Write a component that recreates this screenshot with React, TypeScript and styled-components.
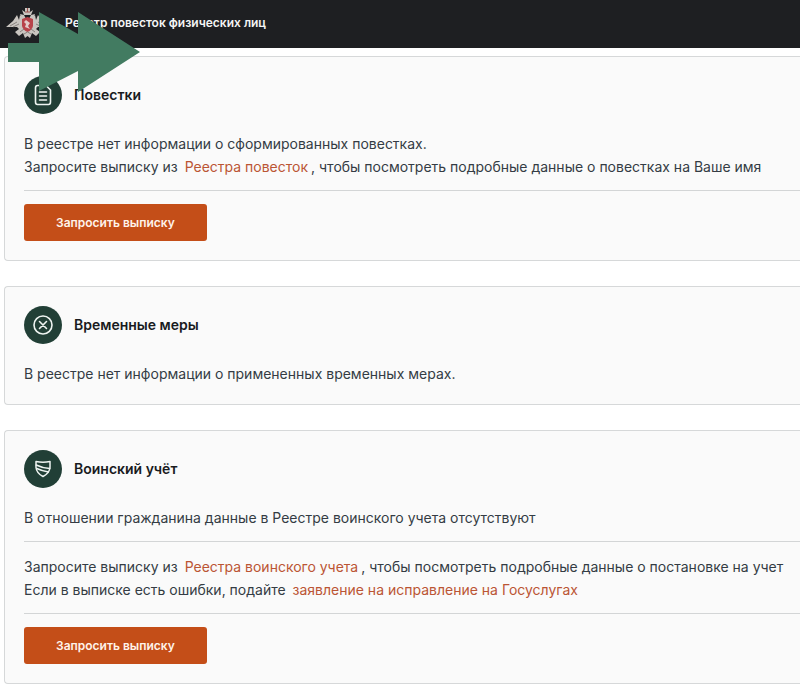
import React from "react";
import styled, { createGlobalStyle } from "styled-components";

const GlobalStyle = createGlobalStyle`
  *, *::before, *::after { box-sizing: border-box; }
  body {
    margin: 0;
    background: #fff;
    color: #343c44;
    font-family: Inter, "Liberation Sans", sans-serif;
    overflow-x: hidden;
  }
`;

const Page = styled.div`
  position: relative;
`;

const Header = styled.header`
  display: flex;
  align-items: center;
  gap: 16px;
  height: 48px;
  padding: 0 6px 3px;
  background: #1e1f22;
`;

const SiteName = styled.span`
  color: #f4f4f4;
  font-size: 12px;
  font-weight: 600;
  line-height: 20px;
  white-space: nowrap;
`;

const Main = styled.main`
  display: flex;
  flex-direction: column;
  gap: 25px;
  padding: 8px 0 6px 4px;
`;

const Card = styled.section`
  padding: 19px 0 19px 19px;
  border: 1px solid #d6d8d9;
  border-right: 0;
  border-radius: 4px 0 0 4px;
  background: #fafafa;
`;

const CardHead = styled.div`
  display: flex;
  align-items: center;
  gap: 12px;
  margin-bottom: 18px;
`;

const Badge = styled.span`
  display: flex;
  align-items: center;
  justify-content: center;
  width: 38px;
  height: 38px;
  border-radius: 50%;
  background: #213f36;
`;

const Title = styled.h2`
  margin: 0;
  color: #191b1e;
  font-size: 14px;
  font-weight: 600;
  line-height: 20px;
`;

const Text = styled.p`
  margin: 0;
  font-size: 14px;
  line-height: 23px;
`;

const Link = styled.a`
  padding: 0 3px;
  color: #bb5534;
  text-decoration: none;
`;

const Rule = styled.hr`
  height: 1px;
  margin: 12px 0 13px;
  border: 0;
  background: #d3d5d6;
`;

const Button = styled.button`
  display: block;
  height: 37px;
  padding: 0 32px;
  border: 0;
  border-radius: 3px;
  background: #c44e18;
  color: #fff3ea;
  font-family: inherit;
  font-size: 12px;
  font-weight: 600;
  cursor: pointer;
`;

const ArrowOverlay = styled.svg`
  position: absolute;
  top: 12px;
  left: 8px;
  pointer-events: none;
`;

const Emblem = () => (
  <svg width="43" height="32" viewBox="0 0 43 32" aria-hidden="true">
    <g fill="#c9c5c0">
      <path d="M0 20 L7 14 L11 8 L13 13 L14 8 L17 11 L18 14 L25 14 L26 11 L29 8 L30 13 L32 8 L36 14 L43 20 L32 20 L30 22 L34 25 L30 29 L26 26 L24 31 L21.5 29 L19 31 L17 26 L13 29 L9 25 L13 22 L11 20 Z" />
      <path d="M16 3 L19 5 L19 1 H24 V5 L27 3 L25 8 H18 Z" />
      <path d="M14 7 L18 8 L20 12 L16 12 Z M29 7 L25 8 L23 12 L27 12 Z" />
    </g>
    <path d="M16 12 L21.5 10 L27 12 V19 Q26 23 21.5 25 Q17 23 16 19 Z" fill="#b8434a" />
    <path d="M20 13 L24 16 L22 19 L24 22 L19 20 L20 17 L18 15 Z" fill="#e3cdca" />
    <g fill="none" stroke="#77706c" strokeWidth="0.8">
      <path d="M4 19 L11 15 M7 20 L13 17 M39 19 L32 15 M36 20 L30 17 M14 25 L18 22 M29 25 L25 22" />
      <path d="M18 27 L21.5 25 L25 27" />
    </g>
    <path d="M19 5 h5 M21.5 1 v4" stroke="#9b514e" strokeWidth="1" />
  </svg>
);

const DocumentIcon = () => (
  <svg width="20" height="22" viewBox="0 0 20 22" fill="none" stroke="#eef4f1" strokeWidth="1.6" strokeLinecap="round" strokeLinejoin="round" aria-hidden="true">
    <path d="M4.5 1.5 H13 L17.5 6 V18 Q17.500 20.500 15.500 20.500 H4.500 Q2.500 20.500 2.500 18 V4 Q2.500 1.500 4.500 1.500 Z" />
    <path d="M6.500 8 H13.500 M6.500 12 H13.500 M6.500 16 H13.500" />
  </svg>
);

const CrossIcon = () => (
  <svg width="22" height="22" viewBox="0 0 22 22" fill="none" stroke="#eef4f1" strokeWidth="1.6" strokeLinecap="round" aria-hidden="true">
    <circle cx="11" cy="11" r="9" />
    <path d="M7.500 7.500 L14.500 14.500 M14.500 7.500 L7.500 14.500" />
  </svg>
);

const ShieldIcon = () => (
  <svg width="20" height="20" viewBox="0 0 20 20" fill="none" stroke="#eef4f1" strokeWidth="1.5" strokeLinecap="round" strokeLinejoin="round" aria-hidden="true">
    <path d="M3 2.500 Q10 4 17 2.500 V8.500 Q16.500 14 10 17.500 Q3.500 14 3 8.500 Z" />
    <path d="M3.200 6 Q9 9 16.800 9.500 M3.800 9.500 Q9 12 15.500 13" />
  </svg>
);

type SectionProps = {
  title: string;
  icon: React.ReactNode;
  children: React.ReactNode;
};

const Section = ({ title, icon, children }: SectionProps) => (
  <Card>
    <CardHead>
      <Badge>{icon}</Badge>
      <Title>{title}</Title>
    </CardHead>
    {children}
  </Card>
);

export default function App() {
  return (
    <Page>
      <GlobalStyle />
      <Header>
        <Emblem />
        <SiteName>Реестр повесток физических лиц</SiteName>
      </Header>
      <Main>
        <Section title="Повестки" icon={<DocumentIcon />}>
          <Text>
            В реестре нет информации о сформированных повестках.
            <br />
            Запросите выписку из <Link href="#summons">Реестра повесток</Link>, чтобы посмотреть подробные данные о повестках на Ваше имя
          </Text>
          <Rule />
          <Button type="button">Запросить выписку</Button>
        </Section>
        <Section title="Временные меры" icon={<CrossIcon />}>
          <Text>В реестре нет информации о примененных временных мерах.</Text>
        </Section>
        <Section title="Воинский учёт" icon={<ShieldIcon />}>
          <Text>В отношении гражданина данные в Реестре воинского учета отсутствуют</Text>
          <Rule />
          <Text>
            Запросите выписку из <Link href="#registry">Реестра воинского учета</Link>, чтобы посмотреть подробные данные о постановке на учет
            <br />
            Если в выписке есть ошибки, подайте <Link href="#correction">заявление на исправление на Госуслугах</Link>
          </Text>
          <Rule />
          <Button type="button">Запросить выписку</Button>
        </Section>
      </Main>
      <ArrowOverlay width="132" height="80" viewBox="0 0 132 80" aria-hidden="true">
        <path d="M0 31 H31 V0 L70 22 V0 L132 40 L70 80 V59 L31 79 V50 H0 Z" fill="#427b61" />
      </ArrowOverlay>
    </Page>
  );
}
